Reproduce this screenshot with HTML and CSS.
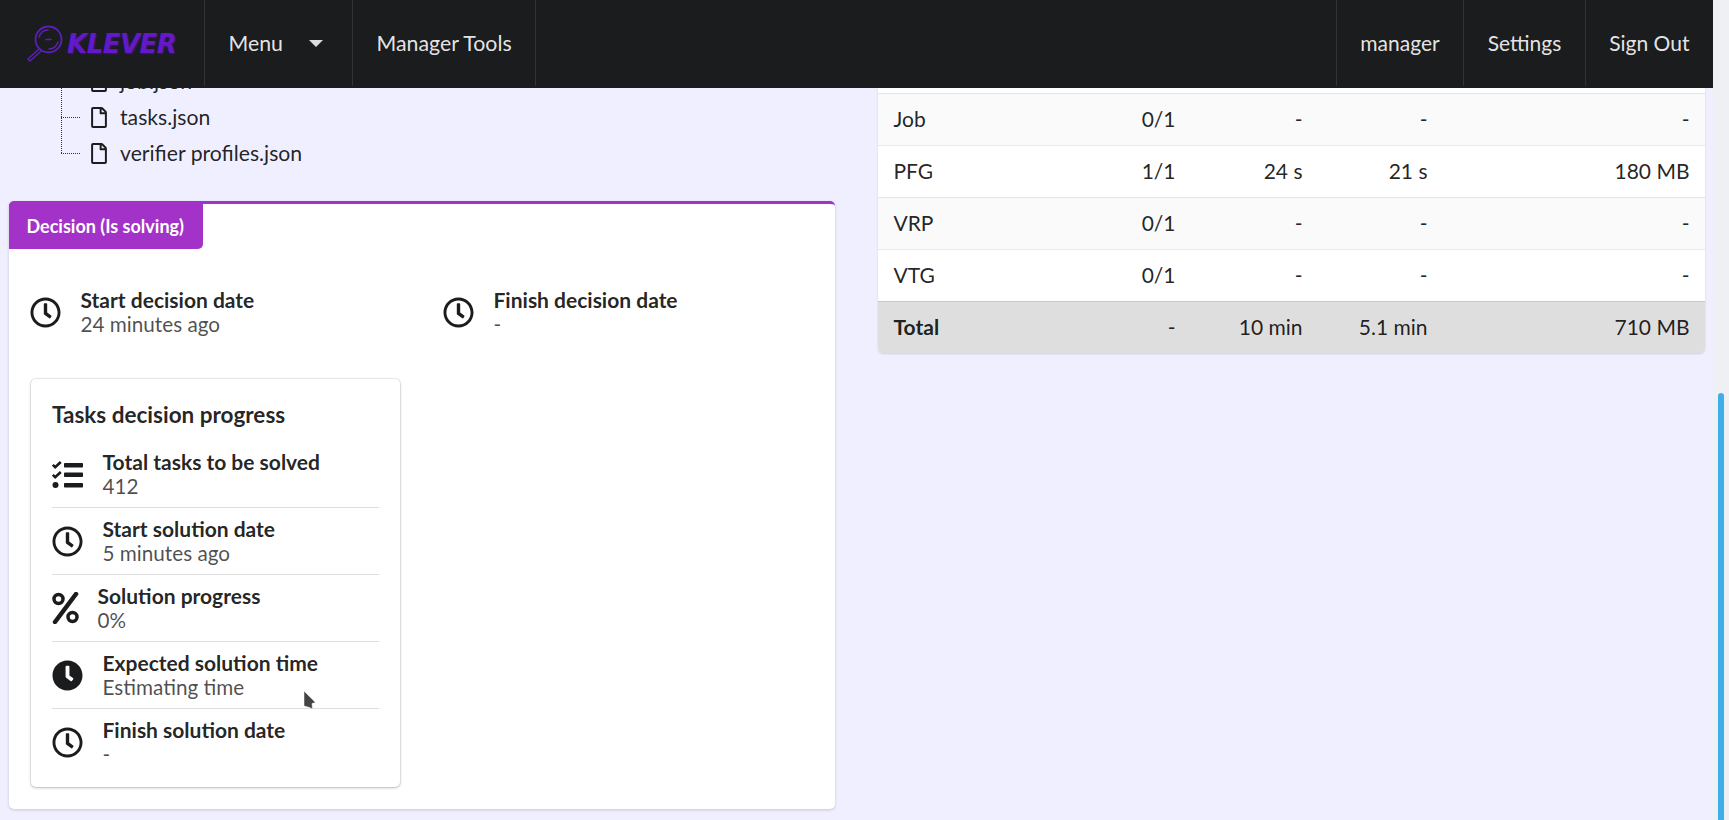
FILE: index.html
```html
<!DOCTYPE html>
<html lang="en">
<head>
  <meta charset="UTF-8">
  <title>Klever - Job</title>
  <link rel="stylesheet" href="styles.css">
</head>
<body>

  <svg class="defs" width="0" height="0">
    <symbol id="clock" viewBox="0 0 512 512"><path d="M256 8C119 8 8 119 8 256s111 248 248 248 248-111 248-248S393 8 256 8zm0 448c-110.5 0-200-89.5-200-200S145.5 56 256 56s200 89.5 200 200-89.5 200-200 200zm61.8-104.4l-84.9-61.7c-3.1-2.3-4.9-5.9-4.9-9.7V116c0-6.6 5.4-12 12-12h32c6.6 0 12 5.4 12 12v141.7l66.8 48.6c5.4 3.9 6.5 11.4 2.6 16.8L334.6 349c-3.9 5.3-11.4 6.5-16.8 2.6z"/></symbol>
    <symbol id="clock-solid" viewBox="0 0 512 512"><path d="M256,8C119,8,8,119,8,256S119,504,256,504,504,393,504,256,393,8,256,8Zm92.49,313h0l-20,25a16,16,0,0,1-22.49,2.5h0l-67-49.72a40,40,0,0,1-15-31.23V112a16,16,0,0,1,16-16h32a16,16,0,0,1,16,16V256l58,42.5A16,16,0,0,1,348.49,321Z"/></symbol>
    <symbol id="file" viewBox="0 0 384 512"><path d="M369.9 97.9L286 14C277 5 264.8-.1 252.1-.1H48C21.5 0 0 21.5 0 48v416c0 26.5 21.5 48 48 48h288c26.5 0 48-21.5 48-48V131.9c0-12.7-5.1-25-14.1-34zM332.1 128H256V51.9l76.1 76.1zM48 464V48h160v104c0 13.3 10.7 24 24 24h104v288H48z"/></symbol>
  </svg>

  <div class="page">
    <nav class="navbar">
      <a class="logo">
        <svg class="logo-icon" width="38" height="38" viewBox="0 0 38 38" fill="none" stroke="#5b1fb5" stroke-linecap="round">
          <circle cx="23.5" cy="14.5" r="13" stroke-width="1.8"/>
          <path d="M14 12a10 10 0 0 1 9-7M33 17a10 10 0 0 1-9 7" stroke-width="1.5"/>
          <path d="M21 14.5h5" stroke-width="1.6"/>
          <path d="M14 24L3 34l2 2 11-10" stroke-width="1.5" stroke-linejoin="round"/>
        </svg>
        <span class="logo-text">KLEVER</span>
      </a>
      <a class="nav-item nav-menu">Menu <i class="caret"></i></a>
      <a class="nav-item">Manager Tools</a>
      <div class="nav-right">
        <a class="nav-item">manager</a>
        <a class="nav-item">Settings</a>
        <a class="nav-item">Sign Out</a>
      </div>
    </nav>

    <main class="columns">
      <section class="col-left">
        <ul class="tree">
          <li><span class="branch"></span><svg class="file-icon"><use href="#file"/></svg>job.json</li>
          <li><span class="branch"></span><svg class="file-icon"><use href="#file"/></svg>tasks.json</li>
          <li><span class="branch"></span><svg class="file-icon"><use href="#file"/></svg>verifier profiles.json</li>
        </ul>

        <div class="decision-card">
          <div class="ribbon">Decision (Is solving)</div>

          <div class="dates">
            <div class="media">
              <svg class="icon"><use href="#clock"/></svg>
              <div>
                <div class="media-title">Start decision date</div>
                <div class="media-value">24 minutes ago</div>
              </div>
            </div>
            <div class="media">
              <svg class="icon"><use href="#clock"/></svg>
              <div>
                <div class="media-title">Finish decision date</div>
                <div class="media-value">-</div>
              </div>
            </div>
          </div>

          <div class="progress-card">
            <h3>Tasks decision progress</h3>

            <div class="media row">
              <svg class="icon icon-tasks" viewBox="0 0 31 27">
                <path class="tick" d="M.8 3.800l2.400 2.400L8.800 1"/>
                <path class="tick" d="M.8 13.800l2.400 2.400L8.800 11"/>
                <circle cx="3.500" cy="24" r="3"/>
                <rect x="12" y="2" width="19" height="4.500" rx=".8"/>
                <rect x="12" y="11.500" width="19" height="4.500" rx=".8"/>
                <rect x="12" y="22" width="19" height="4.500" rx=".8"/>
              </svg>
              <div>
                <div class="media-title">Total tasks to be solved</div>
                <div class="media-value">412</div>
              </div>
            </div>

            <div class="media row">
              <svg class="icon"><use href="#clock"/></svg>
              <div>
                <div class="media-title">Start solution date</div>
                <div class="media-value">5 minutes ago</div>
              </div>
            </div>

            <div class="media row">
              <svg class="icon icon-percent" viewBox="0 0 27 32">
                <circle cx="6.500" cy="7" r="4.500"/>
                <circle cx="20.500" cy="25" r="4.500"/>
                <path d="M24 2L3 30"/>
              </svg>
              <div>
                <div class="media-title">Solution progress</div>
                <div class="media-value">0%</div>
              </div>
            </div>

            <div class="media row">
              <svg class="icon"><use href="#clock-solid"/></svg>
              <div>
                <div class="media-title">Expected solution time</div>
                <div class="media-value">Estimating time</div>
              </div>
            </div>

            <div class="media row">
              <svg class="icon"><use href="#clock"/></svg>
              <div>
                <div class="media-title">Finish solution date</div>
                <div class="media-value">-</div>
              </div>
            </div>
          </div>
        </div>
      </section>

      <section class="col-right">
        <table class="resources">
          <colgroup>
            <col class="c-name"><col class="c-ratio"><col class="c-cpu"><col class="c-wall"><col class="c-mem">
          </colgroup>
          <tbody>
            <tr><td>&nbsp;</td><td></td><td></td><td></td><td></td></tr>
            <tr><td>Job</td><td>0/1</td><td>-</td><td>-</td><td>-</td></tr>
            <tr><td>PFG</td><td>1/1</td><td>24 s</td><td>21 s</td><td>180 MB</td></tr>
            <tr><td>VRP</td><td>0/1</td><td>-</td><td>-</td><td>-</td></tr>
            <tr><td>VTG</td><td>0/1</td><td>-</td><td>-</td><td>-</td></tr>
          </tbody>
          <tfoot>
            <tr><td>Total</td><td>-</td><td>10 min</td><td>5.1 min</td><td>710 MB</td></tr>
          </tfoot>
        </table>
      </section>
    </main>

    <svg class="cursor" width="14" height="21" viewBox="0 0 14 21">
      <path d="M1 1l11.500 11.500-3.500 1 .5 5.500-3-1.500L1 16z" fill="#444" stroke="#fff" stroke-width=".5"/>
    </svg>
  </div>

  <div class="scrollbar"><div class="thumb"></div></div>

</body>
</html>
```

FILE: styles.css
```css
* {
  box-sizing: border-box;
}

html, body {
  height: 100%;
}

body {
  margin: 0;
  display: flex;
  overflow: hidden;
  font-family: Lato, "Open Sans", Arial, sans-serif;
  font-size: 21px;
  line-height: 24.5px;
  color: rgba(0, 0, 0, 0.87);
  background-color: #efefff;
}

.defs {
  position: absolute;
}

.page {
  position: relative;
  flex: 1;
  min-width: 0;
  overflow: hidden;
}

/* navbar sits over the scrolled content */
.navbar {
  position: absolute;
  top: 0;
  left: 0;
  right: 0;
  z-index: 5;
  height: 88px;
  padding-bottom: 2px;
  display: flex;
  font-size: 21.3px;
  background-color: #1b1c1d;
  color: rgba(255, 255, 255, 0.9);
}

.logo {
  width: 204px;
  display: flex;
  align-items: center;
  padding-left: 25px;
}

.logo-icon {
  flex: none;
  margin-top: 1px;
}

.logo-text {
  margin-left: 4px;
  margin-top: 2px;
  font-family: "DejaVu Sans", sans-serif;
  font-weight: 700;
  font-style: italic;
  font-size: 26px;
  letter-spacing: -0.5px;
  color: #6419c8;
  text-shadow: 1px 1px 2px rgba(100, 25, 200, 0.45);
}

.nav-item {
  display: flex;
  align-items: center;
  padding: 0 23.5px;
  border-left: 1px solid rgba(255, 255, 255, 0.1);
}

.nav-menu {
  width: 148px;
}

.nav-menu .caret {
  margin-left: 26px;
  width: 0;
  height: 0;
  border-left: 7px solid transparent;
  border-right: 7px solid transparent;
  border-top: 7px solid rgba(255, 255, 255, 0.85);
}

.nav-item:last-of-type {
  border-right: 1px solid rgba(255, 255, 255, 0.1);
}

.nav-right {
  margin-left: auto;
  display: flex;
  font-size: 21px;
}

.nav-right .nav-item:last-of-type {
  border-right: none;
}

.columns {
  display: flex;
  height: 100%;
}

.col-left {
  width: 878px;
  padding: 63px 0 0 9px;
}

.col-right {
  width: 827px;
  padding-top: 41px;
}

/* file tree */
.tree {
  position: relative;
  list-style: none;
  margin: 0 0 30px;
  padding: 0 0 0 52px;
  font-size: 21.2px;
}

.tree::before {
  content: "";
  position: absolute;
  left: 52px;
  top: 0;
  bottom: 18px;
  border-left: 1px dotted #333;
}

.tree li {
  height: 36px;
  display: flex;
  align-items: center;
}

.branch {
  width: 19px;
  margin-right: 11px;
  border-top: 1px dotted #333;
}

.file-icon {
  width: 16px;
  height: 21px;
  margin-right: 13px;
  fill: #1b1c1d;
}

/* decision card */
.decision-card {
  width: 826px;
  height: 608px;
  background-color: #fff;
  border-top: 3px solid #a333c8;
  border-radius: 5px;
  box-shadow: 0 1px 3px rgba(34, 36, 38, 0.2);
}

.ribbon {
  width: 194px;
  height: 45px;
  display: flex;
  align-items: center;
  padding-left: 17.5px;
  background-color: #a333c8;
  color: #fff;
  font-size: 18px;
  font-weight: 700;
  border-radius: 0 0 5px 0;
}

.dates {
  display: grid;
  grid-template-columns: 413px 1fr;
  padding: 39px 21px 0;
}

.media {
  display: flex;
  align-items: center;
  gap: 19.5px;
}

.icon {
  flex: none;
  width: 31px;
  height: 31px;
  fill: #1b1c1d;
}

.icon-tasks .tick {
  fill: none;
  stroke: #1b1c1d;
  stroke-width: 2.600;
}

.icon-percent {
  width: 27px;
  height: 32px;
  fill: none;
  stroke: #1b1c1d;
  stroke-width: 3.500;
  stroke-linecap: round;
}

.icon-percent path {
  stroke-width: 4.500;
}

.media-title {
  font-weight: 700;
  color: rgba(0, 0, 0, 0.87);
}

.media-value {
  margin-top: -1px;
  font-size: 20.7px;
  color: rgba(0, 0, 0, 0.7);
}

.progress-card {
  width: 369px;
  height: 408px;
  margin: 43px 0 0 22px;
  padding: 21px 21px 20px;
  border-radius: 5px;
  box-shadow: 0 1px 3px rgba(34, 36, 38, 0.25), 0 0 0 1px rgba(34, 36, 38, 0.08);
}

.progress-card h3 {
  margin: 0 0 11px;
  font-size: 22.5px;
  line-height: 30px;
  font-weight: 700;
}

.row {
  height: 67px;
  padding: 8px 0;
  border-top: 1px solid rgba(34, 36, 38, 0.15);
}

.progress-card h3 + .row {
  border-top: none;
  height: 66px;
}

.row .icon-percent {
  margin-right: -1px;
}

/* resource table */
.resources {
  width: 100%;
  table-layout: fixed;
  border-collapse: separate;
  border-spacing: 0;
  background-color: #fff;
  border-radius: 5px;
  box-shadow: 0 1px 2px rgba(34, 36, 38, 0.15);
}

.c-name { width: 186px; }
.c-ratio { width: 127px; }
.c-cpu { width: 127px; }
.c-wall { width: 125px; }
.c-mem { width: 262px; }

.resources td {
  height: 52px;
  padding: 0 15.5px;
  text-align: right;
  border-top: 1px solid rgba(34, 36, 38, 0.1);
}

.resources td:first-child {
  text-align: left;
}

.resources tbody tr:nth-child(even) td {
  background-color: #fafafa;
}

.resources tfoot td {
  background-color: #dedede;
  border-top: 1px solid #c8c8c8;
}

.resources tfoot td:first-child {
  font-weight: 700;
  border-bottom-left-radius: 5px;
}

.resources tfoot td:last-child {
  border-bottom-right-radius: 5px;
}

/* the stray mouse pointer in the shot */
.cursor {
  position: absolute;
  left: 303px;
  top: 690px;
  z-index: 6;
}

.scrollbar {
  flex: none;
  width: 16px;
  padding: 393px 5px 0;
  background-color: #eef0f3;
}

.thumb {
  width: 6px;
  height: 100%;
  background-color: #3daee9;
  border-radius: 3px 3px 0 0;
}
```
